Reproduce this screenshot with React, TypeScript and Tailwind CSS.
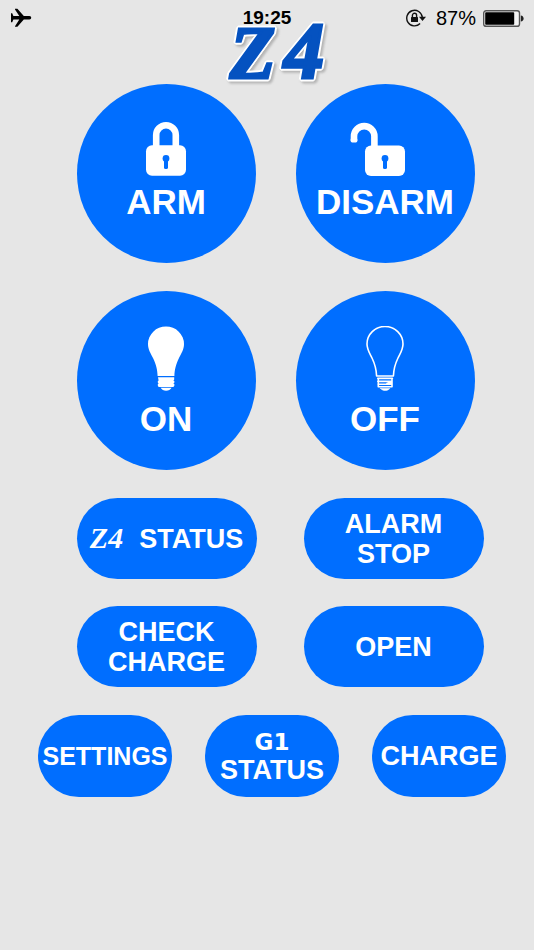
import type { ReactNode } from "react";

const AirplaneIcon = () => (
  <svg width="22" height="20" viewBox="0 0 22 20" fill="black" role="img" aria-label="Airplane mode">
    <path d="M1 5.2H2.2L3.4 8H9.3L5 1.4V.8H7.4L13.8 8H19.4C20.6 8 21.2 8.9 21.2 9.7S20.6 11.4 19.4 11.4H13.8L7.4 18.8H5V18.2L9.3 11.4H3.4L2.2 14.2H1Z" />
  </svg>
);

const RotationLockIcon = () => (
  <svg width="20" height="18" viewBox="0 0 20 18" fill="none" stroke="#111" strokeWidth="1.4" role="img" aria-label="Rotation lock">
    <path d="M14.1 14.6A7.8 7.8 0 1 1 16.3 8.2" />
    <path d="M13 7.8H20L16.5 12Z" fill="#111" stroke="none" />
    <rect x="5" y="8" width="7" height="5" rx=".6" fill="#111" stroke="none" />
    <path d="M6.4 8.4V6.4A2.1 2.1 0 0 1 10.6 6.4V8.4" />
  </svg>
);

const BatteryIcon = () => (
  <svg width="42" height="17" viewBox="0 0 42 17" role="img" aria-label="Battery">
    <rect x="1.7" y=".7" width="35.8" height="15.6" rx="2.4" fill="#f4f4f4" stroke="#555" strokeWidth="1.4" />
    <rect x="3.2" y="2.3" width="29" height="12.4" rx=".8" fill="black" />
    <path d="M38.8 5.4C40.6 5.6 41.6 6.8 41.6 8.5S40.6 11.4 38.8 11.6Z" fill="#222" />
  </svg>
);

const Keyhole = () => (
  <g fill="#006eff">
    <circle cx="35" cy="36.5" r="3.4" />
    <rect x="33" y="37" width="4" height="10" rx="1.6" />
  </g>
);

const LockIcon = () => (
  <svg width="70" height="54" viewBox="0 0 70 54" fill="none" aria-hidden="true">
    <path d="M25.2 27V13.1A9.8 9.8 0 0 1 44.8 13.1V27" stroke="white" strokeWidth="6.6" />
    <rect x="15" y="23.3" width="40" height="30.4" rx="6" fill="white" />
    <Keyhole />
  </svg>
);

const UnlockIcon = () => (
  <svg width="70" height="54" viewBox="0 0 70 54" fill="none" aria-hidden="true">
    <path d="M4 19V14.3A10.2 10.2 0 0 1 24.4 14.3V27" stroke="white" strokeWidth="6.6" />
    <rect x=".7" y="16" width="6.6" height="4.4" rx="1.4" fill="white" />
    <rect x="15" y="23.6" width="40" height="30.4" rx="6" fill="white" />
    <Keyhole />
  </svg>
);

const BULB = "M11.6 50C11.4 44 10.4 39 7 32C4.5 27 2 23.5 2 18A18 17.5 0 0 1 38 18C38 23.5 35.5 27 33 32C29.6 39 28.6 44 28.4 50Z";

const BulbOnIcon = () => (
  <svg width="40" height="65" viewBox="0 0 40 65" fill="white" aria-hidden="true">
    <path d={BULB} />
    <path d="M12 51.2H28.2V53.6L27.4 54.4L28.4 55.2V56.6L27.4 57.4L28.4 58.2V59.6L27.4 61H12.6L11.8 59.6V58.2L12.6 57.4L11.8 56.6V55.2L12.6 54.4Z" />
    <path d="M14.6 61.8H25.6C24.4 63.8 22.6 64.8 20.1 64.8S15.8 63.8 14.6 61.8Z" />
  </svg>
);

const BulbOffIcon = () => (
  <svg width="40" height="65" viewBox="0 0 40 65" fill="none" stroke="white" strokeLinejoin="round" strokeLinecap="round" aria-hidden="true">
    <path d={BULB} strokeWidth="1.6" />
    <path d="M12.8 52.4H27.4M12.8 55.4H26.5L27 58.2H13M13.2 60.8H27M13.3 52.4V60.8M27 52.4V60.8M22 57.6L27 56" strokeWidth="1.6" />
    <path d="M15.6 62.4H24.8C23.6 63.9 22.2 64.4 20.2 64.4S16.8 63.9 15.6 62.4Z" fill="white" strokeWidth=".6" />
  </svg>
);

// The white rim is a filter, so the blue stroke can thicken the letters under it
const Logo = () => (
  <svg width="108" height="64" viewBox="0 0 108 64" className="overflow-visible" role="img" aria-label="Z4">
    <g
      className="font-['Liberation_Serif',serif] font-bold italic [filter:drop-shadow(1px_1px_0_white)_drop-shadow(-1px_-1px_0_white)_drop-shadow(1px_-1px_0_white)_drop-shadow(-1px_1px_0_white)_drop-shadow(2px_2px_1px_#8888)]"
      fill="#0552c0"
      stroke="#0552c0"
      strokeWidth="3"
    >
      <text x="7" y="58" fontSize="74">Z</text>
      <text x="61" y="58" fontSize="80">4</text>
    </g>
  </svg>
);

interface RoundButtonProps { icon: ReactNode; label: string; className: string; }

const RoundButton = ({ icon, label, className }: RoundButtonProps) => (
  <button className={`w-[179px] h-[179px] shrink-0 rounded-full bg-[#006eff] flex flex-col items-center justify-center text-[35px] leading-10 ${className}`}>
    {icon}
    {label}
  </button>
);

const PillButton = ({ children }: { children: ReactNode }) => (
  <button className="w-[180px] h-[81px] shrink-0 rounded-full bg-[#006eff] flex items-center justify-center text-[27px] leading-[30px]">
    {children}
  </button>
);

const SmallPill = ({ children, className = "text-[27px]" }: { children: ReactNode; className?: string }) => (
  <button className={`w-[134px] h-[82px] shrink-0 rounded-full bg-[#006eff] flex flex-col items-center justify-center leading-7 ${className}`}>
    {children}
  </button>
);

const StatusBar = () => (
  <header className="relative z-10 grid grid-cols-3 items-center h-9 px-[10px] text-black">
    <AirplaneIcon />
    <time className="justify-self-center text-[19px] leading-5 font-bold">19:25</time>
    <div className="flex items-center justify-self-end">
      <RotationLockIcon />
      <span className="ml-[10px] mr-[6px] text-xl leading-5">87%</span>
      <BatteryIcon />
    </div>
  </header>
);

const App = () => (
  <div className="min-h-screen bg-[#e6e6e6] font-['Liberation_Sans',Arial,sans-serif]">
    <StatusBar />
    <h1 className="-mt-4 flex justify-center pl-5">
      <Logo />
    </h1>
    <main className="flex flex-col gap-7 pb-10 text-white font-bold">
      <div className="flex justify-center gap-10 pl-[17px]">
        <RoundButton icon={<LockIcon />} label="ARM" className="gap-[6px] pb-[3px]" />
        <RoundButton icon={<UnlockIcon />} label="DISARM" className="gap-[6px] pb-[3px]" />
      </div>
      <div className="flex justify-center gap-10 pl-[17px]">
        <RoundButton icon={<BulbOnIcon />} label="ON" className="gap-2 pt-[3px]" />
        <RoundButton icon={<BulbOffIcon />} label="OFF" className="gap-2 pt-[3px]" />
      </div>
      <div className="flex flex-col gap-[27px] pl-[26px]">
        <div className="flex justify-center gap-[47px]">
          <PillButton>
            <span className="flex items-baseline gap-4">
              <span className="font-['Liberation_Serif',serif] italic text-[30px]">Z4</span>
              STATUS
            </span>
          </PillButton>
          <PillButton>
            ALARM
            <br />
            STOP
          </PillButton>
        </div>
        <div className="flex justify-center gap-[47px]">
          <PillButton>
            CHECK
            <br />
            CHARGE
          </PillButton>
          <PillButton>OPEN</PillButton>
        </div>
      </div>
      <div className="flex justify-center gap-[33px] pl-[10px]">
        <SmallPill className="text-[25px]">SETTINGS</SmallPill>
        <SmallPill>
          <span className="font-['DejaVu_Sans',sans-serif] text-[23px]">G1</span>
          STATUS
        </SmallPill>
        <SmallPill>CHARGE</SmallPill>
      </div>
    </main>
  </div>
);

export default App;
